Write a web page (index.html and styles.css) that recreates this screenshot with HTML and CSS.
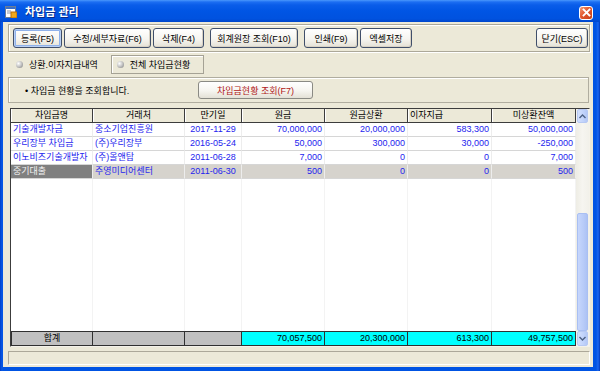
FILE: index.html
```html
<!DOCTYPE html>
<html lang="ko">
<head>
    <meta charset="UTF-8">
    <title>차입금 관리</title>
    <link rel="stylesheet" href="styles.css">
</head>
<body>
    <div class="window">
        <div class="titlebar">
            <svg class="app-icon" width="12" height="12" viewBox="0 0 12 12">
                <rect x="0.5" y="0.5" width="10" height="11" fill="#fff" stroke="#6b7c95"/>
                <rect x="1" y="1" width="9" height="2" fill="#3a6fc8"/>
                <rect x="2" y="4.5" width="4" height="1" fill="#8a94a8"/>
                <rect x="2" y="6.5" width="4" height="1" fill="#8a94a8"/>
                <rect x="6" y="6" width="6" height="6" fill="#f0a81c" stroke="#b86d08"/>
            </svg>
            <span class="title">차입금 관리</span>
            <div class="close-btn">
                <svg width="9" height="9" viewBox="0 0 9 9">
                    <path d="M1.5 1.5 L7.5 7.5 M7.5 1.5 L1.5 7.5" stroke="#fff" stroke-width="1.8" stroke-linecap="square"/>
                </svg>
            </div>
        </div>

        <div class="client">
            <div class="toolbar">
                <button class="btn btn-default w-reg">등록(F5)</button>
                <button class="btn w-edit">수정/세부자료(F6)</button>
                <button class="btn w-del">삭제(F4)</button>
                <button class="btn w-ledger sep">회계원장 조회(F10)</button>
                <button class="btn w-print sep">인쇄(F9)</button>
                <button class="btn w-excel">엑셀저장</button>
                <button class="btn w-close push">닫기(ESC)</button>
            </div>

            <div class="tabs">
                <div class="tab"><span class="radio"></span>상환.이자지급내역</div>
                <div class="tab active"><span class="radio"></span>전체 차입금현황</div>
            </div>

            <div class="info">
                <span class="info-text">• 차입금 현황을 조회합니다.</span>
                <button class="btn btn-query">차입금현황 조회(F7)</button>
            </div>

            <div class="grid">
                <div class="table">
                    <div class="row head">
                        <div class="cell">차입금명</div>
                        <div class="cell">거래처</div>
                        <div class="cell">만기일</div>
                        <div class="cell">원금</div>
                        <div class="cell">원금상환</div>
                        <div class="cell left">이자지급</div>
                        <div class="cell">미상환잔액</div>
                    </div>
                    <div class="row">
                        <div class="cell">기술개발자금</div>
                        <div class="cell">중소기업진흥원</div>
                        <div class="cell center">2017-11-29</div>
                        <div class="cell num">70,000,000</div>
                        <div class="cell num">20,000,000</div>
                        <div class="cell num">583,300</div>
                        <div class="cell num">50,000,000</div>
                    </div>
                    <div class="row">
                        <div class="cell">우리장부 차입금</div>
                        <div class="cell">(주)우리장부</div>
                        <div class="cell center">2016-05-24</div>
                        <div class="cell num">50,000</div>
                        <div class="cell num">300,000</div>
                        <div class="cell num">30,000</div>
                        <div class="cell num">-250,000</div>
                    </div>
                    <div class="row">
                        <div class="cell">이노비즈기술개발자</div>
                        <div class="cell">(주)올앤탑</div>
                        <div class="cell center">2011-06-28</div>
                        <div class="cell num">7,000</div>
                        <div class="cell num">0</div>
                        <div class="cell num">0</div>
                        <div class="cell num">7,000</div>
                    </div>
                    <div class="row selected">
                        <div class="cell current">중기대출</div>
                        <div class="cell">주영미디어센터</div>
                        <div class="cell center">2011-06-30</div>
                        <div class="cell num">500</div>
                        <div class="cell num">0</div>
                        <div class="cell num">0</div>
                        <div class="cell num">500</div>
                    </div>
                    <div class="row filler">
                        <div class="cell"></div>
                        <div class="cell"></div>
                        <div class="cell"></div>
                        <div class="cell"></div>
                        <div class="cell"></div>
                        <div class="cell"></div>
                        <div class="cell"></div>
                    </div>
                    <div class="row total">
                        <div class="cell center">합계</div>
                        <div class="cell"></div>
                        <div class="cell"></div>
                        <div class="cell num sum">70,057,500</div>
                        <div class="cell num sum">20,300,000</div>
                        <div class="cell num sum">613,300</div>
                        <div class="cell num sum">49,757,500</div>
                    </div>
                </div>

                <div class="scrollbar">
                    <div class="sb-btn">
                        <svg width="7" height="5" viewBox="0 0 7 5"><path d="M0.5 4 L3.5 1 L6.5 4" fill="none" stroke="#4d6185" stroke-width="1.4"/></svg>
                    </div>
                    <div class="sb-track">
                        <div class="sb-thumb"></div>
                    </div>
                    <div class="sb-btn">
                        <svg width="7" height="5" viewBox="0 0 7 5"><path d="M0.5 1 L3.5 4 L6.5 1" fill="none" stroke="#4d6185" stroke-width="1.4"/></svg>
                    </div>
                </div>
            </div>

            <div class="statusbar"></div>
        </div>
    </div>
</body>
</html>
```

FILE: styles.css
```css
* {
    box-sizing: border-box;
}

body {
    margin: 0;
    font-family: "Liberation Sans", "Noto Sans CJK KR", sans-serif;
    font-size: 9px;
    color: #000;
    background: #ece9d8;
}

.window {
    width: 600px;
    height: 371px;
    display: flex;
    flex-direction: column;
    background: linear-gradient(to right, #0040c8 0, #0858e8 2px, #0054e3 3px, #0054e3 596px, #1a66f0 598px, #0038b8 600px);
}

/* title bar */
.titlebar {
    height: 22px;
    flex-shrink: 0;
    display: flex;
    align-items: center;
    padding: 0 7px 0 5px;
    background: linear-gradient(#4a98fc 0, #1c6ef2 2px, #0a5de9 5px, #0055e4 50%, #0052df 85%, #0046cc 100%);
}

.app-icon {
    flex-shrink: 0;
    margin-top: 2px;
}

.title {
    margin-left: 8px;
    color: #fff;
    font-size: 11px;
    font-weight: bold;
    text-shadow: 1px 1px 0 #0a2a88;
}

.close-btn {
    margin-left: auto;
    margin-top: 3px;
    width: 14px;
    height: 14px;
    border: 1px solid #fff;
    border-radius: 3px;
    background: linear-gradient(135deg, #f29a78 0%, #e2582e 45%, #c63d18 100%);
    display: flex;
    align-items: center;
    justify-content: center;
}

/* client area */
.client {
    flex: 1;
    margin: 0 7px 4px 3px;
    padding: 2px 3px 2px 5px;
    background: #ece9d8;
    display: flex;
    flex-direction: column;
}

.toolbar {
    height: 28px;
    flex-shrink: 0;
    display: flex;
    align-items: center;
    gap: 2px;
    padding: 0 1px 0 4px;
    border: 1px solid #aca899;
    box-shadow: inset 1px 1px 0 #fff, 1px 1px 0 #fff;
}

.btn {
    height: 20px;
    padding: 0;
    font: inherit;
    color: #000;
    border: 1px solid #404f6a;
    border-radius: 3px;
    background: linear-gradient(#ffffff 0%, #f6f5f0 55%, #e4e1d6 100%);
    box-shadow: inset -1px -1px 0 #d8d2c4;
    white-space: nowrap;
}

.btn-default {
    box-shadow: inset 0 0 0 1px #b9d0f4, inset 0 0 0 2px #8fb1ea;
}

.w-reg { width: 49px; }
.w-edit { width: 87px; }
.w-del { width: 51px; }
.w-ledger { width: 88px; }
.w-print { width: 54px; }
.w-excel { width: 52px; }
.w-close { width: 52px; }

.sep {
    margin-left: 4px;
}

.push {
    margin-left: auto;
}

/* tabs */
.tabs {
    height: 25px;
    flex-shrink: 0;
    display: flex;
    align-items: flex-start;
    padding: 3px 0 0 2px;
}

.tab {
    height: 19px;
    display: flex;
    align-items: center;
    gap: 6px;
    padding: 0 7px 0 5px;
    margin-right: 5px;
    border: 1px solid transparent;
}

.tab.active {
    width: 93px;
    border-color: #a5a295;
    box-shadow: inset 1px 1px 0 #fff;
}

.radio {
    width: 7px;
    height: 7px;
    border-radius: 50%;
    background: radial-gradient(circle at 35% 35%, #ffffff 0%, #c8c8c8 45%, #7a7a7a 100%);
}

/* info panel */
.info {
    height: 26px;
    flex-shrink: 0;
    display: flex;
    align-items: center;
    padding-left: 16px;
    margin-right: 1px;
    border: 1px solid #b0ad9f;
    box-shadow: inset 1px 1px 0 #fff;
}

.info-text {
    width: 173px;
}

.btn-query {
    width: 115px;
    height: 18px;
    color: #b01818;
    border-color: #8a8a84;
    box-shadow: none;
}

/* grid */
.grid {
    flex: 1;
    margin: 5px 0 0 2px;
    display: flex;
    border: 1px solid;
    border-color: #3c3c3c #f4f2ea #f4f2ea #3c3c3c;
    background: #fff;
}

.table {
    width: 565px;
    display: flex;
    flex-direction: column;
}

.row {
    height: 14px;
    flex-shrink: 0;
    display: grid;
    grid-template-columns: 82px 92px 57px 83px 83px 84px 84px;
}

.cell {
    overflow: hidden;
    white-space: nowrap;
    line-height: 13px;
    padding: 0 2px;
    color: #2424ee;
    border-right: 1px solid #ededed;
    border-bottom: 1px solid #d6d6d6;
}

.center {
    text-align: center;
}

.num {
    text-align: right;
}

.row.head .cell {
    color: #000;
    text-align: center;
    background: #ece9d8;
    border-right: 1px solid #3c3c3c;
    border-bottom: 1px solid #3c3c3c;
    box-shadow: inset 1px 0 0 #fff;
}

.row.head .cell.left {
    text-align: left;
}

.row.selected .cell {
    background: #d6d3cd;
}

.row.selected .cell.current {
    background: #808080;
    color: #f2f2f2;
}

.row.filler {
    flex: 1;
}

.row.filler .cell {
    border-bottom: none;
    border-right-color: #f3f3f3;
}

.row.total {
    height: 15px;
}

.row.total .cell {
    color: #000;
    line-height: 13px;
    background: #c0c0c0;
    border-top: 1px solid #303030;
    border-right: 1px solid #303030;
    border-bottom: 1px solid #303030;
}

.row.total .cell:first-child {
    border-left: 1px solid #303030;
}

.row.total .cell.sum {
    background: #00ffff;
}

/* scrollbar */
.scrollbar {
    flex: 1;
    display: flex;
    flex-direction: column;
    background: #f4f3ee;
}

.sb-btn {
    height: 14px;
    flex-shrink: 0;
    display: flex;
    align-items: center;
    justify-content: center;
    margin: 0 1px;
    border: 1px solid #b7c9f3;
    border-radius: 2px;
    background: linear-gradient(to right, #d3e0fd, #c1d3fb 60%, #b4c8f6);
}

.sb-btn:last-child {
    height: 15px;
}

.sb-track {
    flex: 1;
    display: flex;
    flex-direction: column;
    background: linear-gradient(to right, #eeede5, #f6f5f0 50%, #f2f1ea);
}

.sb-thumb {
    margin: auto 1px 0;
    height: 118px;
    border: 1px solid #a9bff3;
    border-radius: 2px;
    background: linear-gradient(to right, #c6d6fc, #b8cbf8 60%, #adc2f4);
}

/* status bar */
.statusbar {
    height: 14px;
    flex-shrink: 0;
    margin-top: 4px;
    border: 1px solid;
    border-color: #aca899 #fff #fff #aca899;
}
```
